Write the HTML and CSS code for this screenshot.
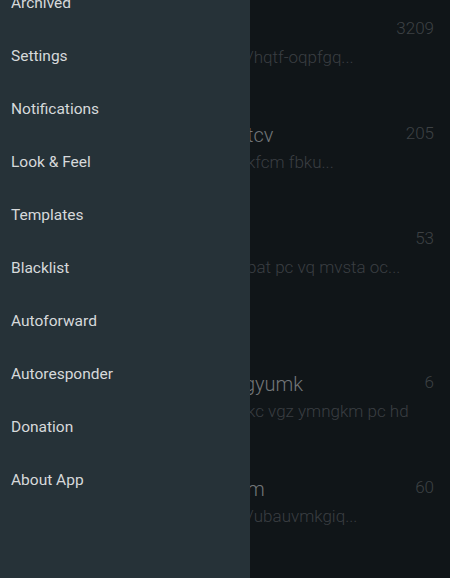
FILE: index.html
```html
<!DOCTYPE html>
<html lang="en">
<head>
  <meta charset="UTF-8">
  <title>Messages</title>
  <meta name="viewport" content="width=device-width, initial-scale=1">
  <link rel="stylesheet" href="styles.css">
</head>
<body>

  <div class="list">
    <div class="row">
      <div class="row-text">
        <div class="title">&nbsp;</div>
        <div class="sub">/hqtf-oqpfgq...</div>
      </div>
      <div class="count">3209</div>
    </div>
    <div class="row">
      <div class="row-text">
        <div class="title">tcv</div>
        <div class="sub">kfcm fbku...</div>
      </div>
      <div class="count">205</div>
    </div>
    <div class="row tall">
      <div class="row-text">
        <div class="title">&nbsp;</div>
        <div class="sub">bat pc vq mvsta oc...</div>
      </div>
      <div class="count">53</div>
    </div>
    <div class="row">
      <div class="row-text">
        <div class="title shift">gyumk</div>
        <div class="sub">kc vgz ymngkm pc hd</div>
      </div>
      <div class="count">6</div>
    </div>
    <div class="row">
      <div class="row-text">
        <div class="title">m</div>
        <div class="sub">/ubauvmkgiq...</div>
      </div>
      <div class="count">60</div>
    </div>
  </div>

  <!-- drawer over the list -->
  <nav class="drawer">
    <div class="drawer-items">
      <a href="#">Archived</a>
      <a href="#">Settings</a>
      <a href="#">Notifications</a>
      <a href="#">Look &amp; Feel</a>
      <a href="#">Templates</a>
      <a href="#">Blacklist</a>
      <a href="#">Autoforward</a>
      <a href="#">Autoresponder</a>
      <a href="#">Donation</a>
      <a href="#">About App</a>
    </div>
  </nav>

</body>
</html>
```

FILE: styles.css
```css
html, body {
  margin: 0;
  height: 100%;
}

body {
  font-family: Roboto, 'Noto Sans', sans-serif;
  background-color: #101518;
  overflow: hidden;
  position: relative;
}

/* ===== LIST ===== */
.list {
  display: flex;
  flex-direction: column;
}

.row {
  display: flex;
  height: 105px;
  box-sizing: border-box;
  padding: 18px 16px 0 247px;
}

.row.tall {
  height: 144px;
}

.row-text {
  flex: 1;
  min-width: 0;
}

.title {
  font-size: 20px;
  font-weight: 300;
  line-height: 24px;
  color: #727578;
}

.title.shift {
  margin-left: -3px;
}

.sub {
  margin-top: 4px;
  font-size: 17px;
  font-weight: 300;
  line-height: 22px;
  color: #3a3e42;
  white-space: nowrap;
}

.count {
  font-size: 17px;
  font-weight: 300;
  line-height: 20px;
  color: #3d4144;
}

/* ===== DRAWER ===== */
.drawer {
  position: absolute;
  left: 0;
  top: 0;
  width: 250px;
  height: 100%;
  background-color: #263238;
}

.drawer-items {
  margin-top: -24px;
}

.drawer-items a {
  display: flex;
  align-items: center;
  height: 53px;
  padding-left: 11px;
  font-size: 15.5px;
  color: #d6d9db;
  text-decoration: none;
}
```
